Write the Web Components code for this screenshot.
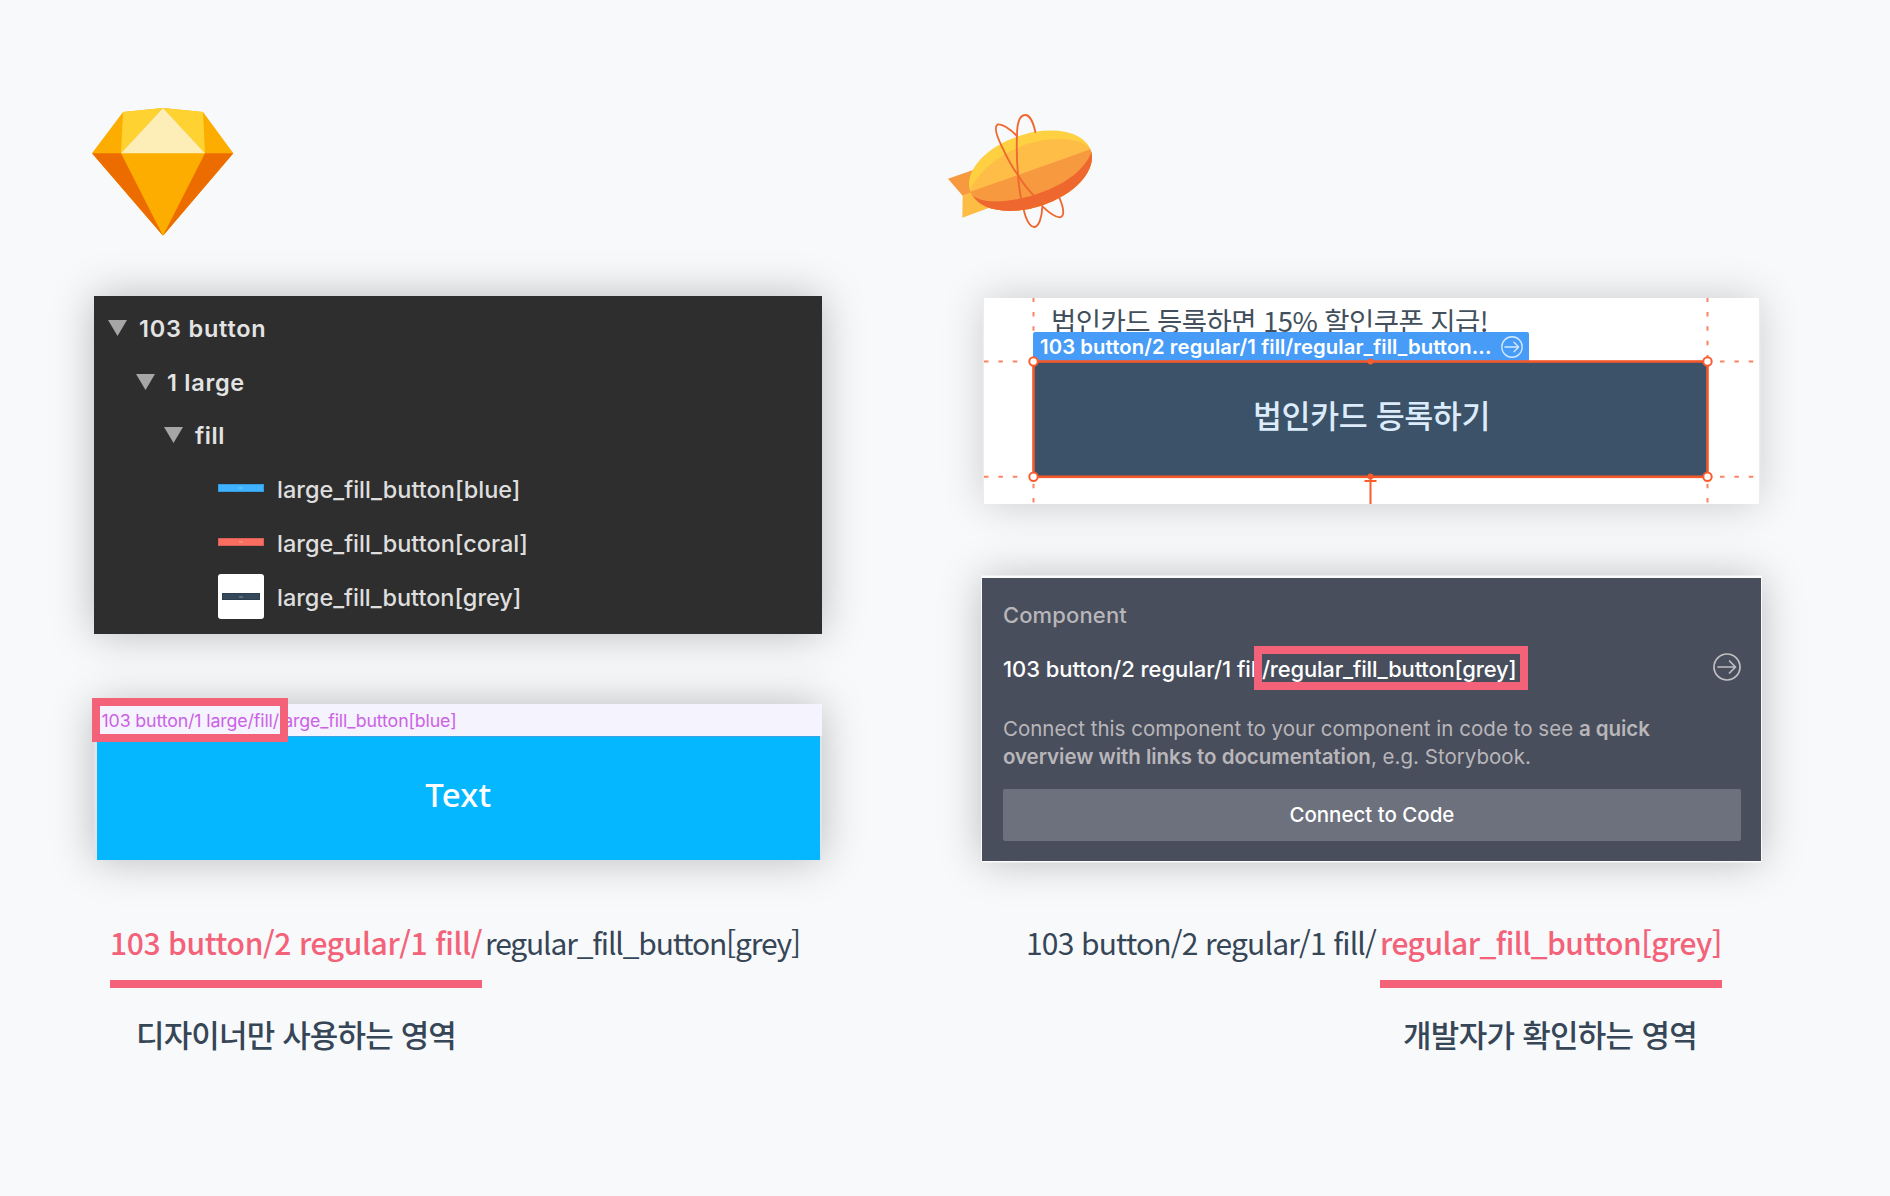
<!DOCTYPE html>
<html lang="ko">
<head>
<meta charset="utf-8">
<title>Component naming</title>
<style>
html,body{margin:0;height:100%;background:#f7f9fb}
body{font-family:Inter,"Noto Sans CJK KR",sans-serif;overflow:hidden}
</style>
</head>
<body>
<naming-board></naming-board>
<script>
const mount=(el,html)=>{el.attachShadow({mode:'open'}).innerHTML=html;};

/* One line of text whose tracking is tuned so that it spans the width in "w". */
class FitText extends HTMLElement{
  constructor(){super();mount(this,`<style>:host{display:block;white-space:pre;width:max-content}span{display:inline-block}</style><span><slot></slot></span>`);}
  connectedCallback(){
    const w=+this.getAttribute('w');if(!w)return;
    const s=this.shadowRoot.querySelector('span');
    s.style.letterSpacing='0px';
    const n=this.textContent.length,nat=s.getBoundingClientRect().width;
    s.style.letterSpacing=((w-nat)/n).toFixed(3)+'px';
  }
}

class SketchLogo extends HTMLElement{
  constructor(){super();mount(this,`<style>:host{display:block;width:142px;height:128px}svg{display:block}</style>
<svg width="142" height="128" viewBox="66 54 426 384">
<path fill="#fdad00" d="M159 66L279 54L399 66L490 190L279 437L66 190Z"/>
<path fill="#ec6c00" d="M66 190H153L279 437ZM490 190H405L279 437Z"/>
<path fill="#fdd231" d="M159 66L279 54L153 190ZM399 66L279 54L405 190Z"/>
<path fill="#fdedb7" d="M279 54L405 190H153Z"/></svg>`);}
}

class ZeplinLogo extends HTMLElement{
  constructor(){super();mount(this,`<style>:host{display:block;width:180px;height:140px}svg{display:block}</style>
<svg width="180" height="140" viewBox="0 0 540 420">
<defs><clipPath id="hull"><ellipse cx="301.500" cy="212" rx="191" ry="110" transform="rotate(-18.500 301.500 212)"/></clipPath></defs>
<path fill="#f6993f" d="M54 236L140 206V276L98 287Z"/><path fill="#fdbd45" d="M98 286L124 277L176 324L97 353Z"/>
<g clip-path="url(#hull)"><path fill="#fed042" d="M80 60H520V360H80Z"/>
<path fill="#fdbd47" d="M80 290L118 273C150 205 225 150 310 127C390 107 465 118 483 150L520 140V380H80Z"/>
<path fill="#f6993f" d="M80 290L520 134V380H80Z"/>
<path fill="#ee672f" d="M80 250L121 279C138 307 210 313 290 291C385 266 463 218 486 152L530 160V380H80Z"/></g>
<g fill="none" stroke="#ee672f" stroke-width="5.500" stroke-linecap="round">
<path d="M316 96C309 63 297 44 285 45C268 46 261 74 261 108C259 150 261 190 264 226C267 267 276 316 287 350C296 374 305 382 314 381C327 378 336 352 337 318"/>
<path d="M261 108C240 87 214 69 202 74C193 81 200 107 214 136C229 169 244 198 264 226C278 248 294 270 311 286"/>
<path d="M338 320C356 337 377 352 389 352C405 350 402 326 388 293"/></g></svg>`);}
}

class ArrowIcon extends HTMLElement{
  constructor(){super();mount(this,`<style>:host{display:block}svg{display:block;width:100%;height:100%}</style>
<svg viewBox="0 0 28 28" fill="none" stroke="currentColor" stroke-width="1.700" stroke-linecap="round" stroke-linejoin="round"><circle cx="14" cy="14" r="13"/><path d="M5 14H22.500M16.500 8L22.500 14L16.500 20"/></svg>`);}
}

class TreeGroup extends HTMLElement{
  constructor(){super();mount(this,`<style>:host{display:flex;align-items:center;height:53.800px;gap:12px;font-weight:600;color:#e3e3e3}svg{display:block;margin-top:-2px}</style>
<svg width="19" height="16"><path fill="#a6a6a6" d="M0 0H19L9.500 16Z"/></svg><slot></slot>`);}
}

class TreeLeaf extends HTMLElement{
  constructor(){super();mount(this,`<style>:host{display:flex;align-items:center;height:53.800px;gap:13px;padding-left:110px;font-weight:500;color:#dedede}
.t{width:46px;height:45px;margin-top:-4px;display:flex;align-items:center;justify-content:center;border-radius:3px}
.b{width:46px;height:8px;background:var(--swatch);box-shadow:inset 0 0 0 1px #0002;display:flex;align-items:center;justify-content:center}
.b i{width:4px;height:2px;background:#ffffff30}
:host([framed]) .t{background:#fff;margin-top:-2px}:host([framed]) .b{width:38px;height:7px}</style>
<div class="t"><div class="b"><i></i></div></div><slot></slot>`);}
}

class LayerTree extends HTMLElement{
  constructor(){super();mount(this,`<style>:host{display:flex;flex-direction:column;box-sizing:border-box;width:728px;height:338px;padding:6px 0 0 14px;background:#2e2e2e;box-shadow:0 0 40px #00000040;font-size:23.500px;line-height:32px}</style>
<tree-group><fit-text w="127.500">103 button</fit-text></tree-group>
<tree-group style="margin-left:28px"><fit-text w="78">1 large</fit-text></tree-group>
<tree-group style="margin-left:56px"><fit-text w="30">fill</fit-text></tree-group>
<tree-leaf style="--swatch:#3fb3ff"><fit-text w="243.500">large_fill_button[blue]</fit-text></tree-leaf>
<tree-leaf style="--swatch:#fa6e62"><fit-text w="251">large_fill_button[coral]</fit-text></tree-leaf>
<tree-leaf framed style="--swatch:#34485a"><fit-text w="244.500">large_fill_button[grey]</fit-text></tree-leaf>`);}
}

class FocusBox extends HTMLElement{
  constructor(){super();mount(this,`<style>:host{display:block;position:absolute;box-sizing:border-box;height:44px;border:8px solid #f36278}</style>`);}
}

class SketchArtboard extends HTMLElement{
  constructor(){super();mount(this,`<style>:host{display:block;position:relative;width:728px;height:156px;background:linear-gradient(#f5f3fd 32px,#dfe3ea 32px);box-shadow:0 0 40px #00000040}
header{height:32px;padding-left:7.500px;font-size:17.800px;line-height:33px;color:#cb62e6}
.fill{height:124px;margin:0 2px 0 2.500px;box-sizing:border-box;background:#04b7ff;border-top:1px solid #3da5dd;display:flex;justify-content:center;font:500 33px/116px "Noto Sans","Noto Sans CJK KR",sans-serif;color:#fff}
focus-box{left:-2px;top:-6px;width:196px}</style>
<header><fit-text w="355">103 button/1 large/fill/large_fill_button[blue]</fit-text></header>
<div class="fill"><fit-text w="66">Text</fit-text></div><focus-box></focus-box>`);}
}

class ZeplinCanvas extends HTMLElement{
  constructor(){super();mount(this,`<style>:host{display:block;position:relative;width:775px;height:206px;background:#fff;box-shadow:1.500px 0 0 #ececee,-1.500px 0 0 #ececee,0 0 40px #00000030;font-family:"Noto Sans CJK KR",sans-serif}
.head{height:63.500px;padding-left:67px;font-size:27.500px;line-height:44px;font-weight:400;color:#42505d;box-sizing:border-box}
.btn{margin-left:49.500px;width:674px;height:115px;background:#3c5269;display:flex;justify-content:center;font-size:31.500px;line-height:105px;font-weight:500;color:#dcecfb;border-radius:4px}
.btn fit-text{margin-left:2px}
.label{position:absolute;left:49px;top:34px;width:496px;height:30px;box-sizing:border-box;background:#479cf8;border-radius:2px 2px 0 0;display:flex;align-items:center;padding:0 6px 0 7px;justify-content:space-between;font:600 20.300px/28px Inter,sans-serif;color:#fff}
arrow-icon{width:22px;height:22px;color:#d5e9fe}
.guides{position:absolute;left:0;top:0}</style>
<div class="head"><fit-text w="437">법인카드 등록하면 15% 할인쿠폰 지급!</fit-text></div>
<div class="btn"><fit-text w="237">법인카드 등록하기</fit-text></div>
<div class="label"><fit-text w="451.500">103 button/2 regular/1 fill/regular_fill_button...</fit-text><arrow-icon></arrow-icon></div>
<svg class="guides" width="775" height="206" fill="none" stroke="#fb5c2c">
<g stroke-width="2" stroke-dasharray="4.500 9.900" opacity=".75"><path d="M49.500 -0.500V34M49.500 185.700V206M723.500 -0.500V60M723.500 185.700V206M0 63.500H36M0 178.800H36M736 63.500H771M736 178.800H771"/></g>
<rect x="49.500" y="63.500" width="674" height="115.300" stroke-width="2.600" stroke="#f4592b"/>
<path d="M386.500 179V206M380.500 183H392.500" stroke-width="2"/>
<g fill="#fb5c2c" stroke="none"><circle cx="386.500" cy="63.500" r="3"/><circle cx="386.500" cy="178.500" r="3"/></g>
<g fill="#fff" stroke-width="2"><circle cx="49.500" cy="63.500" r="4.200"/><circle cx="723.500" cy="63.500" r="4.200"/><circle cx="49.500" cy="178.800" r="4.200"/><circle cx="723.500" cy="178.800" r="4.200"/></g></svg>`);}
}

class ComponentPanel extends HTMLElement{
  constructor(){super();mount(this,`<style>:host{display:flex;flex-direction:column;position:relative;box-sizing:border-box;width:779px;height:283px;padding:0 20.500px;background:#484e5c;box-shadow:0 -1.500px 0 1px #fafbfa,0 1px 0 .5px #fafbfa,0 0 40px #00000040;color:#b9b6ba;font-size:20.500px}
.title{margin-top:21.500px;font-size:22px;line-height:30px;font-weight:500}
.row{display:flex;align-items:center;height:30px;margin-top:24px;font-size:22px;line-height:30px;font-weight:500;color:#fff}
arrow-icon{width:28px;height:28px;color:#c2bfc2;margin:-3px 0 0 auto}
.p{display:flex;line-height:28px}.p.first{margin-top:31.500px}b{font-weight:600}
.cta{margin-top:18px;height:52px;background:#6d707d;border-radius:2px;display:flex;justify-content:center;font-weight:500;line-height:51px;color:#fff}
focus-box{left:271.500px;top:68px;width:274px}</style>
<div class="title"><fit-text w="124">Component</fit-text></div>
<div class="row"><fit-text w="259">103 button/2 regular/1 fill</fit-text><fit-text w="254.500">/regular_fill_button[grey]</fit-text><arrow-icon></arrow-icon></div>
<div class="p first"><fit-text w="576">Connect this component to your component in code to see </fit-text><b><fit-text w="71">a quick</fit-text></b></div>
<div class="p"><b><fit-text w="368">overview with links to documentation</fit-text></b><fit-text w="160">, e.g. Storybook.</fit-text></div>
<div class="cta"><fit-text w="165">Connect to Code</fit-text></div><focus-box></focus-box>`);}
}

/* Path caption: both halves of the name, with the emphasised half underlined and explained. */
class PathCaption extends HTMLElement{
  constructor(){super();mount(this,`<style>:host{display:flex;align-items:flex-start;font:400 30px/44px "Noto Sans CJK KR",sans-serif;color:#364656}
.hot{display:flex;flex-direction:column}
.key{height:60px;border-bottom:8px solid #f36278;color:#f36278;font-weight:500}
.note{display:flex;justify-content:center;margin-top:23px;font-size:31px;line-height:46px;font-weight:500;color:#364656}</style>
<slot name="before"></slot><div class="hot"><div class="key"><slot name="key"></slot></div><div class="note"><slot name="note"></slot></div></div><slot name="after"></slot>`);}
}

class NamingBoard extends HTMLElement{
  constructor(){super();mount(this,`<style>:host{display:flex;width:1890px;height:1196px;box-sizing:border-box;background:#f7f9fb}
.col{display:flex;flex-direction:column;align-items:flex-start}
.l{width:888px;padding-left:94px;box-sizing:border-box}.r{padding-left:94px}
.l sketch-logo{margin:108px 0 60px -2px}.l sketch-artboard{margin-top:70px}
.r zeplin-logo{margin:100px 0 58px -52px}.r zeplin-canvas{margin-left:2px}.r component-panel{margin-top:74px;margin-left:.4px}
.l path-caption{margin:60px 0 0 16px}.r path-caption{margin:59px 0 0 44px}</style>
<section class="col l"><sketch-logo></sketch-logo><layer-tree></layer-tree><sketch-artboard></sketch-artboard>
<path-caption><fit-text slot="key" w="372">103 button/2 regular/1 fill/</fit-text><fit-text slot="note" w="320">디자이너만 사용하는 영역</fit-text><fit-text slot="after" w="315" style="margin-left:3px">regular_fill_button[grey]</fit-text></path-caption></section>
<section class="col r"><zeplin-logo></zeplin-logo><zeplin-canvas></zeplin-canvas><component-panel></component-panel>
<path-caption><fit-text slot="before" w="350" style="margin-right:4px">103 button/2 regular/1 fill/</fit-text><fit-text slot="key" w="342">regular_fill_button[grey]</fit-text><fit-text slot="note" w="294" style="margin-left:-2px">개발자가 확인하는 영역</fit-text></path-caption></section>`);}
}

Object.entries({'sketch-logo':SketchLogo,'zeplin-logo':ZeplinLogo,'arrow-icon':ArrowIcon,'tree-group':TreeGroup,'tree-leaf':TreeLeaf,'layer-tree':LayerTree,'focus-box':FocusBox,'sketch-artboard':SketchArtboard,'zeplin-canvas':ZeplinCanvas,'component-panel':ComponentPanel,'path-caption':PathCaption,'naming-board':NamingBoard,'fit-text':FitText}).forEach(([n,c])=>customElements.define(n,c));
</script>
</body>
</html>
